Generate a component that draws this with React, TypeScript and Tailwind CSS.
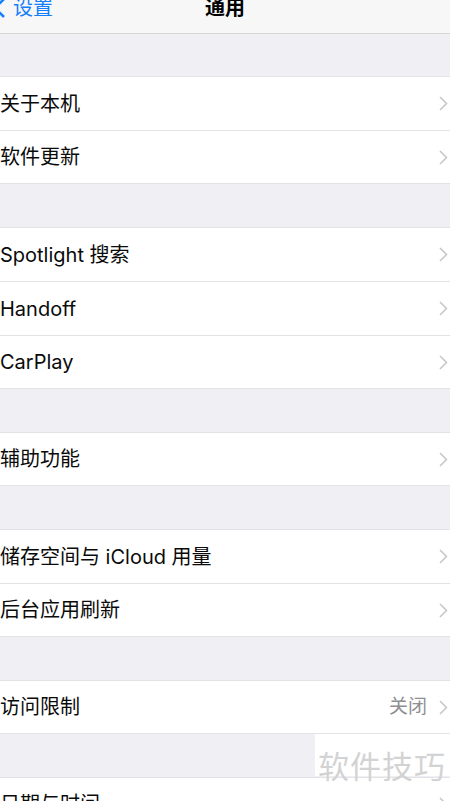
import React from 'react'

type Row = { label: string; detail?: string }

const groups: Row[][] = [
  [{ label: '关于本机' }, { label: '软件更新' }],
  [{ label: 'Spotlight 搜索' }, { label: 'Handoff' }, { label: 'CarPlay' }],
  [{ label: '辅助功能' }],
  [{ label: '储存空间与 iCloud 用量' }, { label: '后台应用刷新' }],
  [{ label: '访问限制', detail: '关闭' }],
  [{ label: '日期与时间' }],
]

const font = { fontFamily: 'Inter, "Noto Sans CJK SC", sans-serif' }

function Chevron() {
  return (
    <svg width="9" height="15" viewBox="0 0 9 15" fill="none" className="shrink-0">
      <path d="M1 1l6.5 6.5L1 14" stroke="#c7c7cc" strokeWidth="1.6" />
    </svg>
  )
}

function SettingsRow({ row, last }: { row: Row; last: boolean }) {
  return (
    <div
      className={`flex items-center justify-between bg-white pr-[2px] ${
        last ? 'h-[52px]' : 'h-[54px] border-b border-[#e3e3e6]'
      }`}
    >
      <span className="text-[20px] text-[#0a0a0a]">{row.label}</span>
      <div className="flex items-center gap-[12px]">
        {row.detail && <span className="text-[19px] text-[#8e8e93]">{row.detail}</span>}
        <Chevron />
      </div>
    </div>
  )
}

export default function App() {
  return (
    <div className="relative h-[801px] w-[450px] overflow-hidden bg-[#efeff4]" style={font}>
      {/* Nav bar, top is cut off in the screenshot */}
      <div className="relative h-[34px] overflow-hidden border-b border-[#d6d6d9] bg-[#f7f7f8]">
        <div className="-mt-[7px] flex h-[30px] items-center">
          <div className="flex items-center">
            <svg width="14" height="22" viewBox="0 0 14 22" fill="none" className="-ml-[8px]">
              <path d="M12 2L3 11l9 9" stroke="#147efb" strokeWidth="2.6" />
            </svg>
            <span className="ml-[7px] text-[20px] text-[#147efb]">设置</span>
          </div>
          <span className="absolute left-1/2 -translate-x-1/2 text-[20px] font-semibold text-black">
            通用
          </span>
        </div>
      </div>

      <div className="flex flex-col">
        {groups.map((g, i) => (
          <div
            key={i}
            className={`${i === 0 ? 'mt-[42px]' : 'mt-[43px]'} border-y border-[#e3e3e6]`}
          >
            {g.map((r, j) => (
              <SettingsRow key={r.label} row={r} last={j === g.length - 1} />
            ))}
          </div>
        ))}
      </div>

      {/* watermark */}
      <div className="absolute left-[315px] top-[734px] h-[42px] w-[135px] bg-white/95" />
      <span className="absolute left-[318px] top-[751px] text-[31px] leading-none tracking-[1px] text-[#d3d3d3]">
        软件技巧
      </span>
    </div>
  )
}
